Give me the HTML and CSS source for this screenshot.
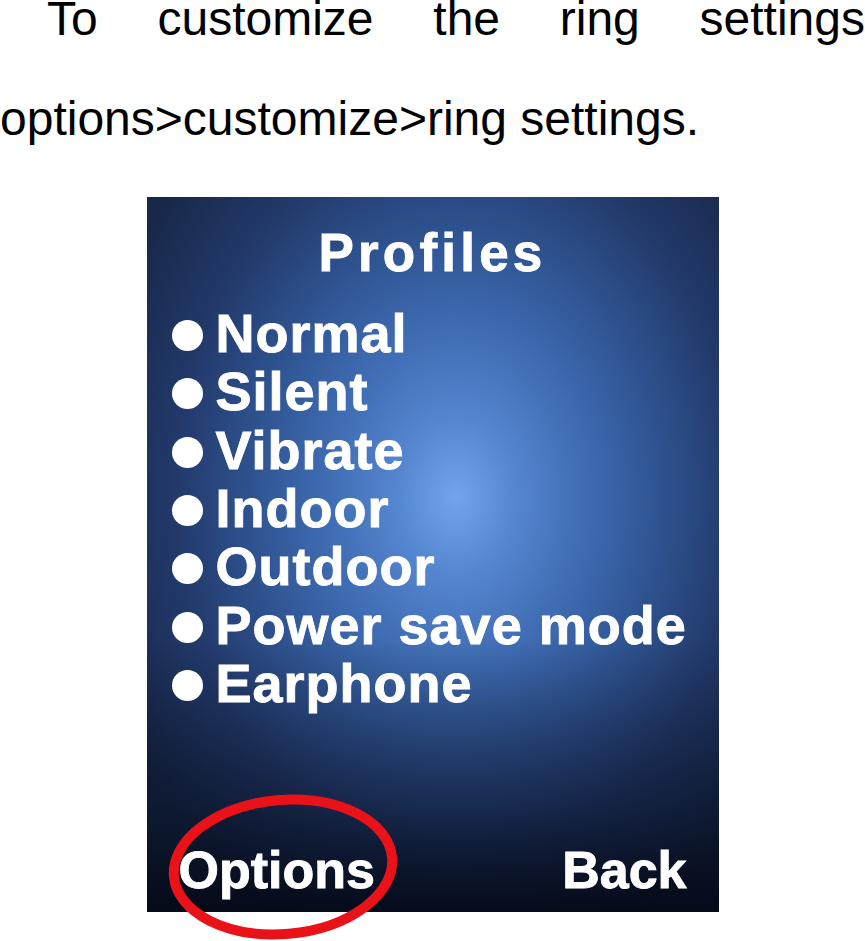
FILE: index.html
```html
<!DOCTYPE html>
<html>
<head>
<meta charset="utf-8">
<link rel="stylesheet" href="styles.css">
</head>
<body>
<p class="intro">To customize the ring settings options&gt;customize&gt;ring settings.</p>
<div class="figure">
  <div class="screen">
    <h1 class="title">Profiles</h1>
    <ul class="list">
      <li class="item"><span class="dot"></span>Normal</li>
      <li class="item"><span class="dot"></span>Silent</li>
      <li class="item"><span class="dot"></span>Vibrate</li>
      <li class="item"><span class="dot"></span>Indoor</li>
      <li class="item"><span class="dot"></span>Outdoor</li>
      <li class="item"><span class="dot"></span>Power save mode</li>
      <li class="item"><span class="dot"></span>Earphone</li>
    </ul>
    <div class="softkeys">
      <span class="softkey">Options</span>
      <span class="softkey">Back</span>
    </div>
    <svg class="mark" width="290" height="190" viewBox="0 0 290 190">
      <ellipse cx="136" cy="90" rx="109.5" ry="67" fill="none" stroke="#ea1219" stroke-width="10" transform="rotate(-5 136 90)"/>
    </svg>
  </div>
</div>
</body>
</html>
```
FILE: styles.css
```css
html, body {
  margin: 0;
  padding: 0;
  background: #ffffff;
  overflow: hidden;
}

body {
  width: 865px;
  height: 941px;
  font-family: "Liberation Sans", Arial, sans-serif;
}

.intro {
  margin: -31px 0 0 0;
  font-size: 48px;
  line-height: 100px;
  text-align: justify;
  text-indent: 47px;
  color: #000;
}

.figure {
  display: flex;
  justify-content: center;
  margin-top: 28px;
}

.screen {
  position: relative;
  width: 572px;
  height: 715px;
  display: flex;
  flex-direction: column;
  color: #ffffff;
  font-weight: bold;
  -webkit-text-stroke: 0.9px #ffffff;
  background:
    linear-gradient(to bottom, rgba(4, 8, 22, 0) 62%, rgba(4, 8, 22, 0.45) 85%, rgba(2, 5, 16, 0.85) 100%),
    radial-gradient(ellipse 370px 480px at 54% 42%, #72a3ec 0%, #5586d0 16%, #3e6bb1 36%, #2e528f 56%, #22396a 76%, #172849 100%);
}

.title {
  margin: 26px 0 0 0;
  font-size: 53px;
  line-height: 60px;
  font-weight: bold;
  letter-spacing: 4.2px;
  text-align: center;
}

.list {
  list-style: none;
  margin: 21px 0 0 0;
  padding: 0 0 0 25px;
}

.item {
  font-size: 54px;
  line-height: 58.33px;
  letter-spacing: 1px;
  white-space: nowrap;
}

.dot {
  display: inline-block;
  width: 31px;
  height: 31px;
  border-radius: 50%;
  background: #ffffff;
  margin-right: 13px;
  vertical-align: 1px;
}

.softkeys {
  margin-top: auto;
  display: flex;
  justify-content: space-between;
  padding: 0 32px 12px 32px;
}

.softkey {
  font-size: 52px;
  line-height: 60px;
  letter-spacing: 0;
}

.mark {
  position: absolute;
  left: 0;
  top: 580px;
  overflow: visible;
}
```
